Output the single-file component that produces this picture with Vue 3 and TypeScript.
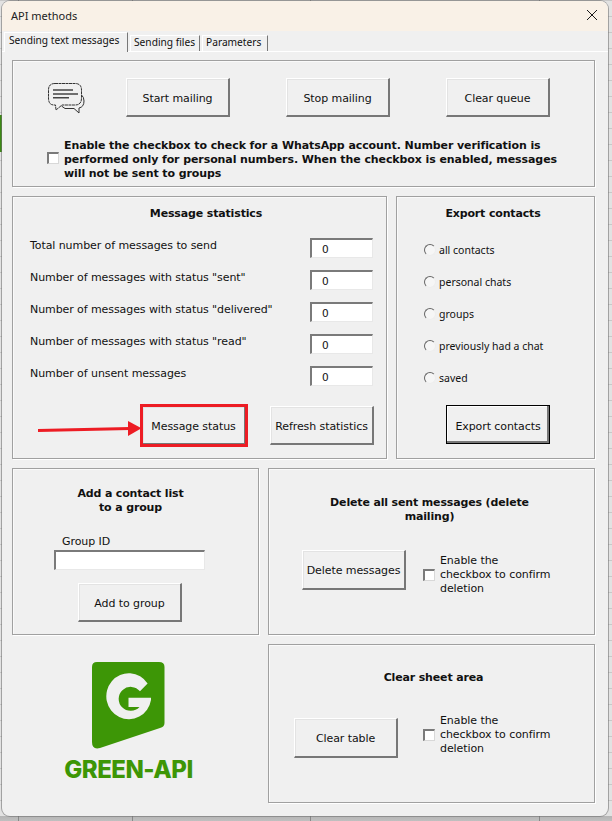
<script setup lang="ts">
const stats: string[] = [
  'Total number of messages to send',
  'Number of messages with status "sent"',
  'Number of messages with status "delivered"',
  'Number of messages with status "read"',
  'Number of unsent messages',
]
const radios: string[] = ['all contacts', 'personal chats', 'groups', 'previously had a chat', 'saved']
</script>

<template>
  <div class="desk">
    <div class="win">
      <div class="titlebar">
        <span>API methods</span>
        <svg class="close" width="12" height="12" viewBox="0 0 12 12"><path d="M1 1 11 11M11 1 1 11" stroke="#1a1a1a" stroke-width="1" fill="none" /></svg>
      </div>
      <div class="tabs">
        <div class="tab active">Sending text messages</div>
        <div class="tab t2">Sending files</div>
        <div class="tab t3">Parameters</div>
      </div>
      <div class="body">
        <section class="panel p1">
          <div class="toprow">
            <svg class="chat" width="38" height="32" viewBox="0 0 38 32" fill="none" stroke="#333" stroke-width="1">
              <path d="M8 1.500H28Q34.500 1.500 34.500 8V16Q34.500 23 28 23H15L9 28 8.500 23H7Q1.500 23 1.500 16V8Q1.500 1.500 8 1.500Z" stroke-dasharray="3 .5" />
              <path d="M34.500 13Q37 15 37 19Q37 25 32 26V31L27 26.500H18L14.500 24" />
              <path d="M6 8H26M6 12H31M6 15.700H22" stroke-width="1.600" stroke="#444" />
            </svg>
            <button class="btn">Start mailing</button>
            <button class="btn b2">Stop mailing</button>
            <button class="btn b2">Clear queue</button>
          </div>
          <div class="verify">
            <span class="check up"></span>
            <p class="boldtext">Enable the checkbox to check for a WhatsApp account. Number verification is performed only for personal numbers. When the checkbox is enabled, messages will not be sent to groups</p>
          </div>
        </section>

        <div class="row2">
          <section class="panel p2">
            <h3>Message statistics</h3>
            <div class="stats">
              <div v-for="s in stats" :key="s" class="stat">
                <span>{{ s }}</span>
                <div class="input num">0</div>
              </div>
            </div>
            <div class="p2btns">
              <button class="btn">Message status</button>
              <button class="btn">Refresh statistics</button>
            </div>
            <div class="redbox"></div>
            <svg class="arrow" width="108" height="18" viewBox="0 0 108 18">
              <path d="M0 10.500 92 8.500" stroke="#ed1c24" stroke-width="3" />
              <path d="M90 1 103.500 8.300 90 16Z" fill="#ed1c24" />
            </svg>
          </section>
          <section class="panel p3">
            <h3>Export contacts</h3>
            <div class="radios">
              <div v-for="r in radios" :key="r" class="radio-row"><span class="radio"></span><span>{{ r }}</span></div>
            </div>
            <button class="btn black">Export contacts</button>
          </section>
        </div>

        <div class="row3">
          <div class="col-left">
            <section class="panel p4">
              <h3>Add a contact list<br />to a group</h3>
              <div class="gid">Group ID</div>
              <div class="input wide"></div>
              <button class="btn">Add to group</button>
            </section>
            <div class="logo">
              <svg width="73" height="87" viewBox="0 0 73 87">
                <path d="M5 0H67Q72.500 0 72.500 5V61Q72.500 65 68 66L8 86Q0 88 0 80V5Q0 0 5 0Z" fill="#3d9606" />
                <path d="M55.600 21.600A22.500 23 0 1 0 59 38V35.700H36.500V45H47.500A12 12 0 1 1 48 29.300Z" fill="#f0f0f0" />
              </svg>
              <div class="logotext">GREEN-API</div>
            </div>
          </div>
          <div class="col-right">
            <section class="panel p5">
              <h3>Delete all sent messages (delete<br />mailing)</h3>
              <div class="confirm">
                <button class="btn">Delete messages</button>
                <span class="check small"></span>
                <p>Enable the<br />checkbox to confirm<br />deletion</p>
              </div>
            </section>
            <section class="panel p6">
              <h3>Clear sheet area</h3>
              <div class="confirm c2">
                <button class="btn">Clear table</button>
                <span class="check small"></span>
                <p>Enable the<br />checkbox to confirm<br />deletion</p>
              </div>
            </section>
          </div>
        </div>
      </div>
    </div>
  </div>
</template>

<style>
html, body { margin: 0; padding: 0; }
</style>

<style scoped>
.desk {
  width: 612px;
  height: 821px;
  overflow: hidden;
  padding: 1px 4px 0 2px;
  box-sizing: border-box;
  background-color: #e2e2e2;
  background-image:
    linear-gradient(#888, #888),
    linear-gradient(#888, #888),
    linear-gradient(#888, #888),
    linear-gradient(#888, #888),
    linear-gradient(to bottom, #b4b4b4, #c0c0c0),
    linear-gradient(#3d8a14, #3d8a14),
    linear-gradient(to bottom, #c8c8c8 1px, transparent 1px);
  background-size: 1px 100%, 1px 100%, 1px 100%, 1px 100%, 100% 5px, 2px 37px, 100% 16px;
  background-position: 18px 0, 132px 0, 310px 0, 539px 0, 0 816px, 0 115px, 0 0;
  background-repeat: no-repeat, no-repeat, no-repeat, no-repeat, no-repeat, no-repeat, repeat;
  font-family: "DejaVu Sans", "Liberation Sans", sans-serif;
  font-size: 11px;
  letter-spacing: -.08px;
  color: #111;
}
.win {
  height: 815px;
  background: #f0f0f0;
  border-radius: 8px;
  box-shadow: 0 0 0 1px rgba(110, 110, 110, .55);
  overflow: hidden;
}
.titlebar {
  height: 30px;
  background: #f9f1e7;
  display: flex;
  align-items: center;
  justify-content: space-between;
  padding: 0 10px 2px 9px;
  box-sizing: border-box;
  font-family: "Noto Sans", sans-serif;
  font-size: 11px;
  letter-spacing: 0;
  color: #222;
}
.tabs {
  display: flex;
  align-items: flex-end;
  height: 20px;
  padding-left: 2px;
  border-bottom: 1px solid #fff;
  font-family: "Noto Sans", sans-serif;
  font-size: 10.200px;
  letter-spacing: 0;
}
.tab {
  box-sizing: border-box;
  height: 16px;
  line-height: 13px;
  padding-left: 3px;
  margin-left: 2px;
  border-top: 1px solid #fff;
  border-left: 1px solid #fff;
  border-right: 1px solid #777;
  white-space: nowrap;
}
.t2 { width: 70px; }
.t3 { width: 66px; }
.tab.active {
  width: 124px;
  height: 20px;
  line-height: 14px;
  margin: 0 0 -1px 0;
  padding-left: 4px;
  background: #f0f0f0;
}
.body {
  padding: 8px 13px 0 10px;
  display: flex;
  flex-direction: column;
  gap: 9px;
}
.panel {
  box-sizing: border-box;
  border: 1px solid #a0a0a0;
  box-shadow: 1px 1px 0 #fff, inset 1px 1px 0 #fafafa;
  position: relative;
}
h3 {
  margin: 0;
  font-size: 11px;
  line-height: 14px;
  font-weight: 700;
  letter-spacing: -.15px;
  text-align: center;
  color: #111;
}
.btn {
  width: 104px;
  height: 39px;
  box-sizing: border-box;
  margin: 0;
  padding: 2px 0 0;
  background: #f0f0f0;
  border-style: solid;
  border-width: 1px 2px 2px 1px;
  border-color: #fff #777 #777 #fff;
  box-shadow: inset 1px 1px 0 #e3e3e3;
  font: inherit;
  letter-spacing: inherit;
  color: #111;
  white-space: nowrap;
}
.p1 { height: 127px; }
.toprow {
  display: flex;
  align-items: center;
  height: 39px;
  margin-top: 17px;
  padding-left: 34px;
}
.chat { margin-right: 41px; }
.b2 { margin-left: 56px; }
.check {
  flex: none;
  display: block;
  width: 12px;
  height: 12px;
  box-sizing: border-box;
  background: #fff;
  border-style: solid;
  border-width: 2px 1px 1px 2px;
  border-color: #7a7a7a #d8d8d8 #d8d8d8 #7a7a7a;
}
.up { margin-top: -5px; }
.verify {
  display: flex;
  align-items: center;
  margin-top: 22px;
  padding-left: 34px;
}
.boldtext {
  margin: 0 0 0 5px;
  width: 495px;
  font-weight: 700;
  line-height: 14px;
  letter-spacing: -.09px;
}
.row2 { display: flex; gap: 9px; height: 263px; }
.p2 { width: 375px; padding-top: 10px; }
.p2 h3 { padding-left: 13px; }
.stats {
  display: flex;
  flex-direction: column;
  gap: 12px;
  margin-top: 17px;
  padding: 0 13px 0 17px;
}
.stat {
  display: flex;
  justify-content: space-between;
  height: 20px;
}
.stat span { line-height: 16px; }
.input {
  box-sizing: border-box;
  background: #fff;
  border-style: solid;
  border-width: 2px 1px 1px 2px;
  border-color: #7a7a7a #e8e8e8 #e8e8e8 #7a7a7a;
}
.num {
  width: 63px;
  height: 20px;
  padding-left: 10px;
  line-height: 18px;
  font-size: 10.500px;
}
.p2btns {
  display: flex;
  gap: 24px;
  margin-top: 20px;
  padding-left: 129px;
}
.redbox {
  position: absolute;
  left: 127px;
  top: 207px;
  width: 108px;
  height: 43px;
  box-sizing: border-box;
  border: 3px solid #ed1c24;
}
.arrow { position: absolute; left: 25px; top: 223px; }
.p3 { width: 199px; padding-top: 10px; }
.p3 h3 { padding-right: 5px; }
.radios {
  display: flex;
  flex-direction: column;
  gap: 16px;
  margin-top: 21px;
  padding-left: 27px;
}
.radio-row {
  display: flex;
  align-items: center;
  gap: 3px;
  height: 16px;
  font-size: 10.500px;
  font-family: "Noto Sans", sans-serif;
  letter-spacing: 0;
}
.radio {
  width: 12px;
  height: 12px;
  box-sizing: border-box;
  border-radius: 50%;
  border: 1.500px solid;
  border-color: #666 #eee #eee #666;
  background: #f6f6f6;
  margin-top: -1px;
}
.black {
  display: block;
  margin: 19px 0 0 49px;
  padding-top: 3px;
  border: 1px solid #000;
  box-shadow: inset -2px -2px 0 #777, inset 1px 1px 0 #fff;
}
.row3 { display: flex; gap: 9px; }
.col-left, .col-right { display: flex; flex-direction: column; gap: 9px; }
.col-left { width: 247px; }
.col-right { width: 327px; }
.p4 { height: 167px; padding-top: 18px; }
.p4 h3 { padding-right: 10px; }
.gid { margin: 20px 0 0 49px; line-height: 14px; }
.wide { width: 151px; height: 20px; margin: 1px 0 0 41px; }
.p4 .btn { display: block; margin: 13px 0 0 65px; }
.logo {
  display: flex;
  flex-direction: column;
  align-items: center;
  padding: 18px 14px 0 0;
}
.logotext {
  margin-top: 8px;
  font-family: Inter, "Noto Sans", sans-serif;
  font-weight: 800;
  font-size: 24px;
  line-height: 26px;
  letter-spacing: -.5px;
  color: #3d9606;
}
.p5 { height: 167px; padding-top: 27px; }
.p5 h3 { padding-right: 4px; }
.p6 { height: 159px; padding-top: 26px; }
.p6 h3 { padding-left: 4px; }
.confirm {
  display: flex;
  align-items: center;
  margin-top: 20px;
  padding-left: 33px;
}
.confirm .btn { height: 40px; }
.confirm .check, .confirm p { margin-top: 10px; }
.c2 { margin-top: 33px; padding-left: 25px; }
.c2 .check, .c2 p { margin-top: -6px; }
.small { margin-left: 17px; }
.c2 .small { margin-left: 25px; }
.confirm p { margin-bottom: 0; margin-right: 0; margin-left: 5px; line-height: 14px; }
</style>
